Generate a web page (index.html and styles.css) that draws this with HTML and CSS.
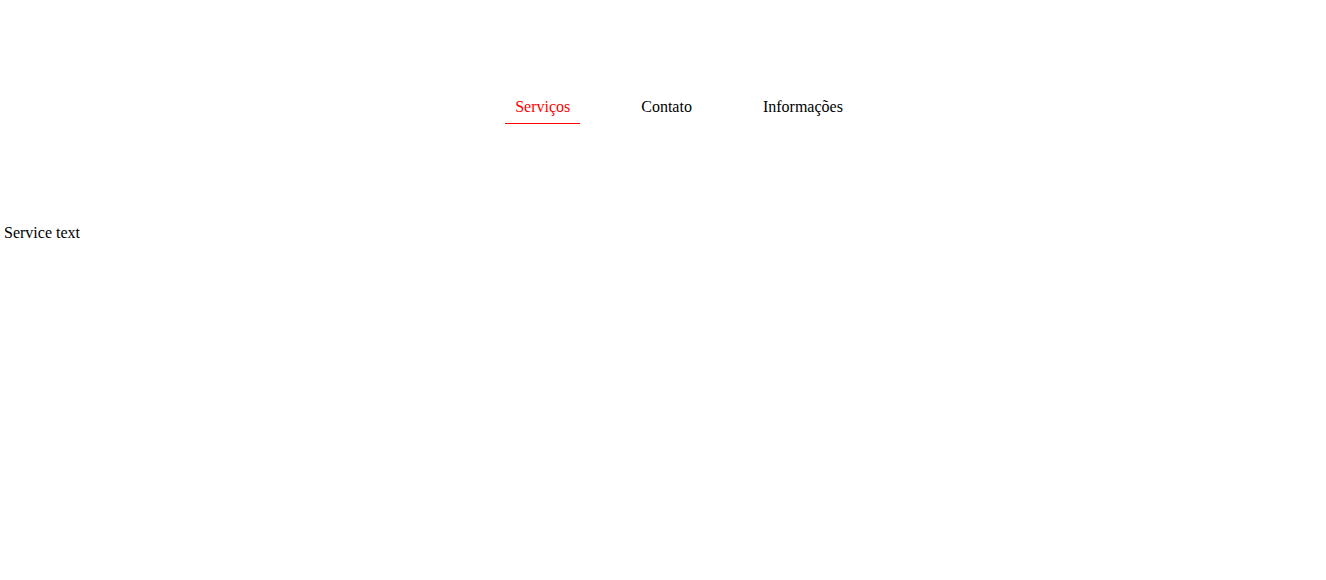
FILE: index.html
```html
<!DOCTYPE html>
<html lang="pt">
<head>
<meta charset="utf-8">
<title>Serviços</title>
<link rel="stylesheet" href="styles.css">
</head>
<body>
<nav class="tabs">
  <a class="tab active" href="#">Serviços</a>
  <a class="tab" href="#">Contato</a>
  <a class="tab" href="#">Informações</a>
</nav>
<main class="content">
  <p class="text">Service text</p>
</main>
</body>
</html>
```
FILE: styles.css
```css
html, body {
  margin: 0;
  padding: 0;
  background: #fff;
}
body {
  font-family: "Liberation Serif", "Times New Roman", serif;
  font-size: 16px;
  line-height: 18px;
  color: #000;
}
.tabs {
  display: flex;
  justify-content: center;
  gap: 51px;
  padding: 98px 0 0 32px;
}
.tab {
  display: block;
  padding: 0 10px 7px;
  color: #000;
  text-decoration: none;
  border-bottom: 1px solid transparent;
}
.tab.active {
  color: #f00;
  border-bottom-color: #f00;
}
.content {
  padding: 100px 4px 0;
}
.text {
  margin: 0;
}
```
